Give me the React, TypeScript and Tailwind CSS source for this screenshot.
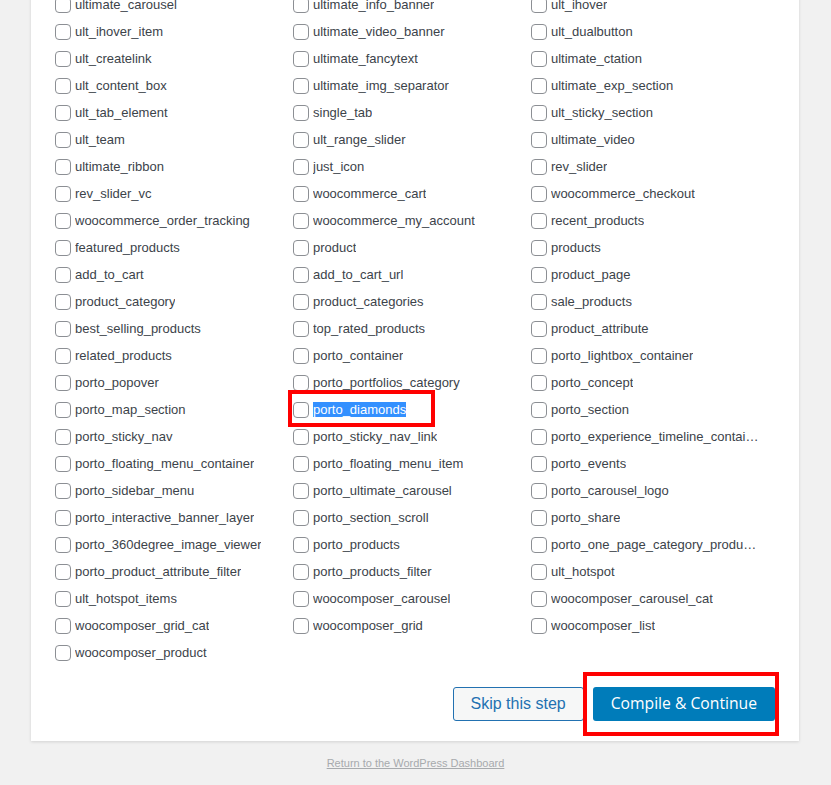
import React from "react";

const items: string[] = [
  "ultimate_carousel", "ultimate_info_banner", "ult_ihover",
  "ult_ihover_item", "ultimate_video_banner", "ult_dualbutton",
  "ult_createlink", "ultimate_fancytext", "ultimate_ctation",
  "ult_content_box", "ultimate_img_separator", "ultimate_exp_section",
  "ult_tab_element", "single_tab", "ult_sticky_section",
  "ult_team", "ult_range_slider", "ultimate_video",
  "ultimate_ribbon", "just_icon", "rev_slider",
  "rev_slider_vc", "woocommerce_cart", "woocommerce_checkout",
  "woocommerce_order_tracking", "woocommerce_my_account", "recent_products",
  "featured_products", "product", "products",
  "add_to_cart", "add_to_cart_url", "product_page",
  "product_category", "product_categories", "sale_products",
  "best_selling_products", "top_rated_products", "product_attribute",
  "related_products", "porto_container", "porto_lightbox_container",
  "porto_popover", "porto_portfolios_category", "porto_concept",
  "porto_map_section", "porto_diamonds", "porto_section",
  "porto_sticky_nav", "porto_sticky_nav_link", "porto_experience_timeline_container",
  "porto_floating_menu_container", "porto_floating_menu_item", "porto_events",
  "porto_sidebar_menu", "porto_ultimate_carousel", "porto_carousel_logo",
  "porto_interactive_banner_layer", "porto_section_scroll", "porto_share",
  "porto_360degree_image_viewer", "porto_products", "porto_one_page_category_products",
  "porto_product_attribute_filter", "porto_products_filter", "ult_hotspot",
  "ult_hotspot_items", "woocomposer_carousel", "woocomposer_carousel_cat",
  "woocomposer_grid_cat", "woocomposer_grid", "woocomposer_list",
  "woocomposer_product",
];

function Item({ name }: { name: string }) {
  const highlighted = name === "porto_diamonds";
  return (
    <div className="relative flex h-[27px] min-w-0 items-center pr-[10px]">
      <span className="h-[16px] w-[16px] shrink-0 rounded-[4px] border border-[#8c8f94] bg-white" />
      <span className="ml-[4px] min-w-0 truncate text-[13px] leading-[16px] text-[#3c434a]">
        {highlighted ? (
          <span className="bg-[#3390ff] text-white">{name}</span>
        ) : (
          name
        )}
      </span>
      {highlighted && (
        <div className="pointer-events-none absolute left-[-5px] top-[-6px] h-[37px] w-[147px] border-[4px] border-[#ff0000]" />
      )}
    </div>
  );
}

export default function App() {
  return (
    <div
      className="min-h-[785px] w-full overflow-hidden bg-[#f1f1f1]"
      style={{ fontFamily: '"Liberation Sans", Arial, sans-serif' }}
    >
      <div className="ml-[31px] w-[768px] bg-white px-[24px] pb-[20px] shadow-[0_1px_3px_rgba(0,0,0,0.13)]">
        <div className="-mt-[9px] grid grid-cols-[238px_238px_238px]">
          {items.map((n) => (
            <Item key={n} name={n} />
          ))}
        </div>
        <div className="mt-[21px] flex justify-end gap-[9px]">
          <button className="h-[34px] rounded-[3px] border border-[#2271b1] bg-[#f6f7f7] px-[17px] text-[16px] text-[#2271b1]">
            Skip this step
          </button>
          <div className="relative">
            <button
              className="h-[34px] rounded-[3px] bg-[#007cba] px-[18px] text-[15.7px] text-white"
              style={{ fontFamily: '"Open Sans", "Noto Sans", sans-serif' }}
            >
              Compile &amp; Continue
            </button>
            <div className="pointer-events-none absolute left-[-10px] top-[-15px] h-[64px] w-[196px] border-[4px] border-[#ff0000]" />
          </div>
        </div>
      </div>
      <div className="mt-[9px] text-center">
        <a className="text-[11px] leading-[13px] text-[#a7aaad] underline" href="#">
          Return to the WordPress Dashboard
        </a>
      </div>
    </div>
  );
}
